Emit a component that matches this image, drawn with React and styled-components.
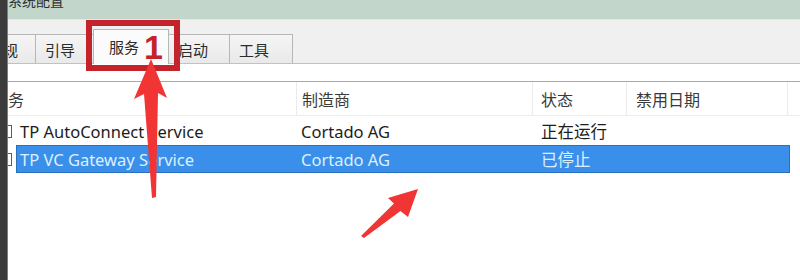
import styled, { createGlobalStyle } from "styled-components";

const GlobalStyle = createGlobalStyle`
  html, body {
    margin: 0;
    padding: 0;
    background: #ffffff;
    overflow: hidden;
  }
  body {
    font-family: "Noto Sans", "Noto Sans CJK SC", sans-serif;
  }
`;

const tabs = [
  { label: "常规", width: 58 },
  { label: "引导", width: 59 },
  { label: "服务", width: 76, active: true },
  { label: "启动", width: 62 },
  { label: "工具", width: 64 },
];

const columns = [
  { title: "服务", width: 313, pad: 8 },
  { title: "制造商", width: 236, pad: 5 },
  { title: "状态", width: 94, pad: 8 },
  { title: "禁用日期", width: 161, pad: 9 },
];

const services = [
  { name: "TP AutoConnect Service", maker: "Cortado AG", state: "正在运行" },
  { name: "TP VC Gateway Service", maker: "Cortado AG", state: "已停止", selected: true },
];

const App = () => {
  return (
    <Page>
      <GlobalStyle />
      <LeftBar />
      <Window>
        <TitleBar>
          <Title>系统配置</Title>
        </TitleBar>
        <TabArea>
          <TabList>
            {tabs.map((t) => (
              <Tab key={t.label} $width={t.width} $active={t.active}>
                {t.label}
              </Tab>
            ))}
          </TabList>
        </TabArea>
        <Panel>
          <ListView>
            <HeaderRow>
              {columns.map((c) => (
                <HeaderCell key={c.title} $width={c.width} $pad={c.pad}>
                  {c.title}
                </HeaderCell>
              ))}
            </HeaderRow>
            {services.map((s) => (
              <Row key={s.name}>
                <CheckCell>
                  <CheckBox />
                </CheckCell>
                <Cells $selected={s.selected}>
                  <Cell $width={281} $pad={3}>{s.name}</Cell>
                  <Cell $width={236} $pad={3}>{s.maker}</Cell>
                  <Cell $width={94} $pad={7}>{s.state}</Cell>
                  <Cell $width={161} $pad={7} />
                </Cells>
              </Row>
            ))}
          </ListView>
        </Panel>
      </Window>

      {/* annotation overlay */}
      <MarkBox>
        <MarkNumber>1</MarkNumber>
      </MarkBox>
      <Arrows width="800" height="280" viewBox="0 0 800 280">
        <polygon
          points="151,59 167,98 158,93 156,197 152,198 144,94 134,99"
          fill="#f13434"
        />
        <polygon
          points="418,189 408,217 400.5,211 364,238 361,236 394,203.5 388,198"
          fill="#f13434"
        />
      </Arrows>
    </Page>
  );
};

const Page = styled.div`
  position: relative;
  display: flex;
  width: 800px;
  height: 280px;
  overflow: hidden;
  background: #ffffff;
`;

const LeftBar = styled.div`
  width: 7px;
  flex-shrink: 0;
  background: #3b3b3b;
  border-right: 1px solid #7d7d7d;
`;

const Window = styled.div`
  flex: 1;
  min-width: 0;
  display: flex;
  flex-direction: column;
  overflow: hidden;
`;

const TitleBar = styled.div`
  height: 19px;
  background: #c3d6cc;
  border-bottom: 1px solid #dfe9e3;
  overflow: hidden;
`;

const Title = styled.span`
  display: block;
  margin-top: -8px;
  font-family: "Noto Sans CJK SC", sans-serif;
  font-size: 14px;
  line-height: 16px;
  color: #2a2f2c;
`;

const TabArea = styled.div`
  height: 43px;
  background: #f0f0f0;
  display: flex;
  align-items: flex-end;
  border-bottom: 1px solid #c2c2c2;
`;

const TabList = styled.div`
  display: flex;
  align-items: flex-end;
  margin-left: -30px;
  margin-bottom: -1px;
`;

const Tab = styled.div`
  box-sizing: border-box;
  width: ${({ $width }) => $width}px;
  height: ${({ $active }) => ($active ? 35 : 30)}px;
  margin-right: -1px;
  padding-left: ${({ $active }) => ($active ? 15 : 9)}px;
  padding-bottom: ${({ $active }) => ($active ? 2 : 0)}px;
  display: flex;
  align-items: center;
  border: 1px solid #b7b7b7;
  border-bottom: ${({ $active }) => ($active ? "none" : "1px solid #c2c2c2")};
  background: ${({ $active }) =>
    $active ? "#fbfbfb" : "linear-gradient(#f5f5f5, #e9e9e9)"};
  position: relative;
  z-index: ${({ $active }) => ($active ? 1 : 0)};
  font-family: "Noto Sans CJK SC", sans-serif;
  font-size: 15px;
  color: #2b2b2b;
`;

const Panel = styled.div`
  flex: 1;
  background: #ffffff;
  padding-top: 17px;
`;

const ListView = styled.div`
  margin-left: -24px;
  border-top: 1px solid #a9a9a9;
`;

const HeaderRow = styled.div`
  display: flex;
  height: 33px;
  border-bottom: 1px solid #ededed;
`;

const HeaderCell = styled.div`
  box-sizing: border-box;
  width: ${({ $width }) => $width}px;
  padding-left: ${({ $pad }) => $pad}px;
  display: flex;
  align-items: center;
  border-right: 1px solid #ebebeb;
  font-family: "Noto Sans CJK SC", sans-serif;
  font-size: 16px;
  color: #3a3a3a;
`;

const Row = styled.div`
  display: flex;
  height: 28px;
  margin-top: 1px;
  & + & {
    margin-top: 0;
  }
`;

const CheckCell = styled.div`
  width: 32px;
  flex-shrink: 0;
  padding-left: 15px;
  box-sizing: border-box;
  display: flex;
  align-items: center;
`;

const CheckBox = styled.span`
  width: 13px;
  height: 13px;
  box-sizing: border-box;
  border: 1px solid #5c5c5c;
  background: #ffffff;
`;

const Cells = styled.div`
  display: flex;
  box-sizing: border-box;
  border: 1px solid ${({ $selected }) => ($selected ? "#2c6fbf" : "transparent")};
  background: ${({ $selected }) => ($selected ? "#3a8fea" : "transparent")};
  color: ${({ $selected }) => ($selected ? "#dcefff" : "#1c1c1c")};
`;

const Cell = styled.div`
  box-sizing: border-box;
  width: ${({ $width }) => $width}px;
  padding-left: ${({ $pad }) => $pad}px;
  display: flex;
  align-items: center;
  font-family: "Noto Sans", "Noto Sans CJK SC", sans-serif;
  font-size: 16.5px;
  white-space: nowrap;
`;

const MarkBox = styled.div`
  position: absolute;
  left: 86px;
  top: 20px;
  width: 94px;
  height: 51px;
  box-sizing: border-box;
  border: 6px solid #c4232c;
  z-index: 2;
`;

const MarkNumber = styled.span`
  position: absolute;
  left: 52px;
  top: 2px;
  font-family: "Liberation Sans", Arial, sans-serif;
  font-weight: bold;
  font-size: 34px;
  line-height: 38px;
  color: #c4232c;
`;

const Arrows = styled.svg`
  position: absolute;
  left: 0;
  top: 0;
  pointer-events: none;
  z-index: 3;
`;

export default App;
